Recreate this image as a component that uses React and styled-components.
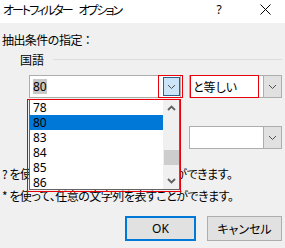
import styled, { createGlobalStyle } from 'styled-components'

const Global = createGlobalStyle`
  html, body { margin: 0; padding: 0; }
  body {
    width: 285px;
    height: 248px;
    overflow: hidden;
    background: #f0f0f0;
    color: #000;
    font-family: "Noto Sans CJK JP", sans-serif;
    font-size: 12px;
    font-feature-settings: "palt";
  }
`

const TitleBar = styled.div`
  height: 23px;
  background: #fff;
  display: flex;
  align-items: center;
  padding: 0 0 4px 3px;
  box-sizing: border-box;
`

const Title = styled.div`
  flex: 1;
  line-height: 16px;
  letter-spacing: -2px;
  word-spacing: 6px;
`

const TitleButton = styled.div`
  width: 46px;
  display: flex;
  justify-content: center;
  font-family: "Noto Sans", sans-serif;
  font-size: 12px;
  line-height: 16px;
  margin-right: ${p => p.$last ? -3 : 0}px;
`

const Body = styled.div`
  padding: 0 3px 0 2px;
`

const Heading = styled.div`
  margin-top: 9px;
  line-height: 16px;
  font-feature-settings: normal;
  letter-spacing: -0.6px;
`

const Group = styled.div`
  margin-top: 4px;
  height: 14px;
  display: flex;
  align-items: center;
  gap: 9px;
  padding-left: 18px;
`

const GroupLine = styled.div`
  flex: 1;
  height: 1px;
  background: #dcdcdc;
`

const Row = styled.div`
  display: flex;
  gap: 8px;
  padding-left: 27px;
  margin-top: ${p => p.$top}px;
`

const ComboWrap = styled.div`
  position: relative;
`

const Combo = styled.div`
  display: flex;
  width: ${p => p.$w}px;
  height: 23px;
  box-sizing: border-box;
  border: 1px solid #adadad;
  background: #fff;
`

const ComboText = styled.div`
  flex: 1;
  display: flex;
  align-items: center;
  padding-left: 3px;
  font-family: "Noto Sans", "Noto Sans CJK JP", sans-serif;
`

const Selected = styled.span`
  background: #c8c8c8;
  line-height: 15px;
`

const ComboButton = styled.div`
  box-sizing: border-box;
  display: flex;
  align-items: center;
  justify-content: center;
  background: ${p => p.$active ? '#cce4f7' : '#e1e1e1'};
  border: ${p => p.$active ? '1px solid #2b5f8c' : 'none'};
  border-left: 1px solid ${p => p.$active ? '#2b5f8c' : '#adadad'};
  margin: ${p => p.$active ? '1px 0' : '0'};
  width: ${p => p.$active ? 17 : 18}px;
`

const Mark = styled.div`
  position: absolute;
  z-index: 20;
  box-sizing: border-box;
  border: 1px solid #e8000b;
  pointer-events: none;
`

const List = styled.div`
  position: absolute;
  z-index: 10;
  left: 0;
  top: 24px;
  width: 151px;
  height: 91px;
  box-sizing: border-box;
  border: 1px solid #646464;
  background: #fff;
  display: flex;
`

const Items = styled.div`
  flex: 1;
`

const Item = styled.div`
  height: 15px;
  line-height: 15px;
  padding-left: 3px;
  font-family: "Noto Sans", sans-serif;
  font-size: 12px;
  background: ${p => p.$selected ? '#0078d7' : 'transparent'};
`

const ScrollBar = styled.div`
  width: 16px;
  background: #f0f0f0;
  display: flex;
  flex-direction: column;
`

const ScrollArrow = styled.div`
  height: 16px;
  display: flex;
  align-items: center;
  justify-content: center;
`

const Track = styled.div`
  flex: 1;
`

const Thumb = styled.div`
  margin: 34px 0 0 1px;
  height: 15px;
  background: #cdcdcd;
`

const Hint = styled.div`
  line-height: 22px;
  margin-top: ${p => p.$top || 0}px;
  white-space: nowrap;
  letter-spacing: -0.5px;
`

const Buttons = styled.div`
  display: flex;
  justify-content: flex-end;
  gap: 11px;
  margin-top: 9px;
`

const Button = styled.div`
  width: ${p => p.$w}px;
  height: 25px;
  box-sizing: border-box;
  display: flex;
  align-items: center;
  justify-content: center;
  background: #e1e1e1;
  border: ${p => p.$default ? '2px solid #0078d7' : '1px solid #adadad'};
  font-family: "Noto Sans", "Noto Sans CJK JP", sans-serif;
`

const Chevron = ({ up, bold }) => (
  <svg width="9" height="6" viewBox="0 0 9 6">
    <path
      d={up ? 'M1 5 L4.5 1.5 L8 5' : 'M1 1 L4.5 4.5 L8 1'}
      fill="none"
      stroke={bold ? '#606060' : '#505050'}
      strokeWidth={bold ? 1.8 : 1}
    />
  </svg>
)

const values = ['78', '80', '83', '84', '85', '86']

export default function App() {
  return (
    <>
      <Global />
      <TitleBar>
        <Title>オートフィルター オプション</Title>
        <TitleButton>?</TitleButton>
        <TitleButton $last>
          <svg width="11" height="11" viewBox="0 0 11 11">
            <path d="M0.5 0.5 L10.5 10.5 M10.5 0.5 L0.5 10.5" stroke="#000" strokeWidth="1" />
          </svg>
        </TitleButton>
      </TitleBar>
      <Body>
        <Heading>抽出条件の指定：</Heading>
        <Group>
          <span>国語</span>
          <GroupLine />
        </Group>

        <Row $top={9}>
          <ComboWrap>
            <Combo $w={152}>
              <ComboText><Selected>80</Selected></ComboText>
              <ComboButton $active><Chevron /></ComboButton>
            </Combo>
            <Mark style={{ left: 129, top: 0, width: 25, height: 23 }} />
            <List>
              <Items>
                {values.map(v => (
                  <Item key={v} $selected={v === '80'}>{v}</Item>
                ))}
              </Items>
              <ScrollBar>
                <ScrollArrow><Chevron up bold /></ScrollArrow>
                <Track><Thumb /></Track>
                <ScrollArrow><Chevron bold /></ScrollArrow>
              </ScrollBar>
            </List>
            <Mark style={{ left: -2, top: 24, width: 154, height: 93 }} />
          </ComboWrap>
          <ComboWrap>
            <Combo $w={93}>
              <ComboText>と等しい</ComboText>
              <ComboButton><Chevron /></ComboButton>
            </Combo>
            <Mark style={{ left: 1, top: 0, width: 69, height: 23 }} />
          </ComboWrap>
        </Row>

        <Row $top={28}>
          <Combo $w={152}>
            <ComboText />
            <ComboButton><Chevron /></ComboButton>
          </Combo>
          <Combo $w={93}>
            <ComboText />
            <ComboButton><Chevron /></ComboButton>
          </Combo>
        </Row>

        <Hint $top={14}>? を使って、任意の 1 文字を表すことができます。</Hint>
        <Hint>* を使って、任意の文字列を表すことができます。</Hint>

        <Buttons>
          <Button $w={71} $default>OK</Button>
          <Button $w={75}>キャンセル</Button>
        </Buttons>
      </Body>
    </>
  )
}
